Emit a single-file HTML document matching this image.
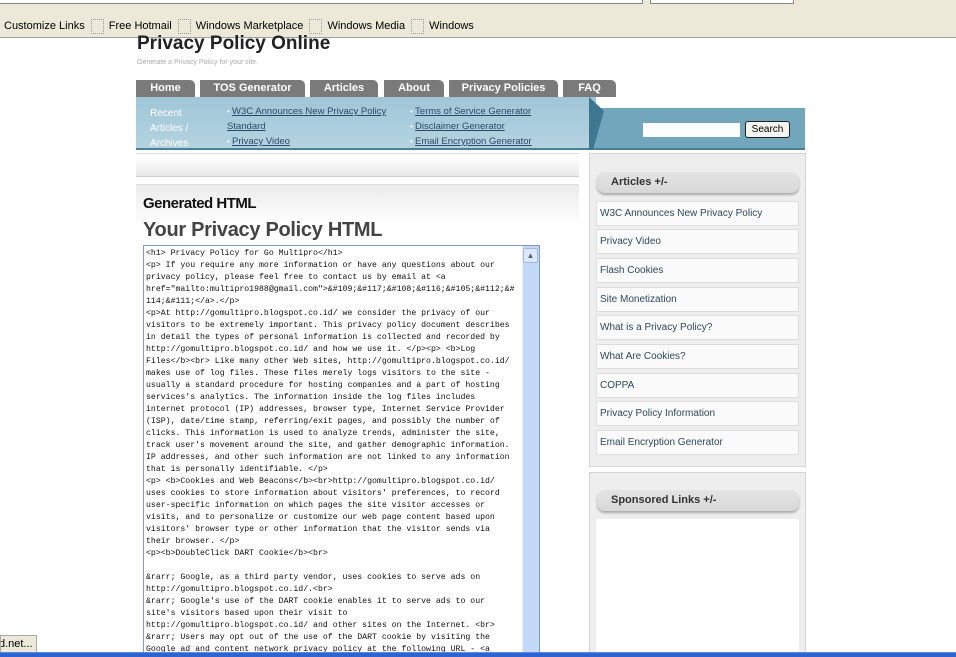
<!DOCTYPE html>
<html><head><meta charset="utf-8"><style>
*{margin:0;padding:0;box-sizing:border-box}
html,body{width:956px;height:657px;overflow:hidden}
body{background:#fff;font-family:"Liberation Sans",sans-serif;position:relative}
.a{position:absolute}
.tab{position:absolute;top:80px;height:17px;background:#7a7a7a;color:#fff;font-weight:bold;font-size:11px;text-align:center;line-height:17px;border-radius:0 5px 0 0}
.blink{color:#2a4a6a;text-decoration:underline;font-size:9.5px}
.bul{color:#fff;font-size:8px}
.item{position:absolute;left:596px;width:203px;height:25px;background:#fafafa;border:1px solid #ddd;font-size:10px;color:#2d4a5a;padding-left:3px;line-height:24px}
pre{font-family:"Liberation Mono",monospace;font-size:8.2px;line-height:12px;color:#111}
.pill{position:absolute;left:597px;width:202px;height:21px;background:linear-gradient(#e4e4e4,#d8d8d8);border-radius:8px;box-shadow:0 2px 2px #aaa;font-weight:bold;font-size:11px;color:#333;padding-left:14px;line-height:21px}
.dot{display:inline-block;width:13px;height:15px;border:1px dotted #999;vertical-align:middle;margin:0 5px 0 3px}
</style></head><body>
<div class="a" style="left:0;top:0;width:956px;height:13px;background:#ece9d8"></div>
<div class="a" style="left:0;top:0;width:643px;height:4px;background:#fff;border-bottom:1px solid #888;border-right:1px solid #888"></div>
<div class="a" style="left:650px;top:0;width:144px;height:4px;background:#fff;border:1px solid #888;border-top:0"></div>
<div class="a" style="left:0;top:13px;width:956px;height:25px;background:#ece9d8;border-bottom:1px solid #a0a0a0;font-size:11px;color:#000;line-height:26px;padding-left:4px;white-space:nowrap">Customize Links <span class="dot"></span>Free Hotmail <span class="dot"></span>Windows Marketplace <span class="dot"></span>Windows Media <span class="dot"></span>Windows</div>

<div class="a" style="left:137px;top:33px;font-size:19px;font-weight:bold;color:#222">Privacy Policy Online</div>
<div class="a" style="left:137px;top:59px;font-size:7px;color:#aaa">Generate a Privacy Policy for your site.</div>

<div class="tab" style="left:136px;width:59px">Home</div>
<div class="tab" style="left:200px;width:105px">TOS Generator</div>
<div class="tab" style="left:310px;width:68px">Articles</div>
<div class="tab" style="left:384px;width:60px">About</div>
<div class="tab" style="left:449px;width:109px">Privacy Policies</div>
<div class="tab" style="left:563px;width:53px">FAQ</div>

<div class="a" style="left:136px;top:97px;width:460px;height:53px;background:linear-gradient(#9fc6d7,#b4d3e0);border-bottom:2px solid #4d7f98"></div>
<div class="a" style="left:589px;top:108px;width:216px;height:42px;background:#72a6bc;border-bottom:2px solid #4d7f98"></div>
<svg class="a" style="left:589px;top:97px" width="16" height="53"><polygon points="0,0 0,53 4,53 15,14" fill="#3f7690"/></svg>
<div class="a" style="left:150px;top:106px;font-size:10px;color:#fff;line-height:15px">Recent<br>Articles /<br>Archives</div>
<div class="a" style="left:227px;top:104px;line-height:15px;font-size:10px;width:170px"><span class="bul">• </span><span class="blink">W3C Announces New Privacy Policy Standard</span><br><span class="bul">• </span><span class="blink">Privacy Video</span></div>
<div class="a" style="left:410px;top:104px;line-height:15px;font-size:10px"><span class="bul">• </span><span class="blink">Terms of Service Generator</span><br><span class="bul">• </span><span class="blink">Disclaimer Generator</span><br><span class="bul">• </span><span class="blink">Email Encryption Generator</span></div>
<div class="a" style="left:643px;top:123px;width:97px;height:14px;background:#fff"></div>
<div class="a" style="left:745px;top:121px;width:45px;height:17px;background:#f4f4f0;border:1px solid #222;border-radius:3px;font-size:10px;text-align:center;line-height:15px">Search</div>

<div class="a" style="left:136px;top:153px;width:443px;height:24px;background:linear-gradient(#fff,#eaeaea);border-top:1px solid #ddd;border-bottom:1px solid #ccc"></div>
<div class="a" style="left:136px;top:184px;width:443px;height:40px;background:linear-gradient(#ebebeb,#fff);border-top:1px solid #ddd"></div>
<div class="a" style="left:143px;top:195px;font-size:15px;font-weight:bold;color:#111;letter-spacing:-0.5px">Generated HTML</div>
<div class="a" style="left:143px;top:219px;font-size:20px;font-weight:bold;color:#444;letter-spacing:-0.3px">Your Privacy Policy HTML</div>

<div class="a" style="left:143px;top:245px;width:397px;height:412px;border:1px solid #7f9db9;border-bottom:0;background:#fff;overflow:hidden">
<pre style="padding:2px 0 0 2px">&lt;h1&gt; Privacy Policy for Go Multipro&lt;/h1&gt;
&lt;p&gt; If you require any more information or have any questions about our
privacy policy, please feel free to contact us by email at &lt;a
href="mailto:multipro1988@gmail.com"&gt;&amp;#109;&amp;#117;&amp;#108;&amp;#116;&amp;#105;&amp;#112;&amp;#
114;&amp;#111;&lt;/a&gt;.&lt;/p&gt;
&lt;p&gt;At http://gomultipro.blogspot.co.id/ we consider the privacy of our
visitors to be extremely important. This privacy policy document describes
in detail the types of personal information is collected and recorded by
http://gomultipro.blogspot.co.id/ and how we use it. &lt;/p&gt;&lt;p&gt; &lt;b&gt;Log
Files&lt;/b&gt;&lt;br&gt; Like many other Web sites, http://gomultipro.blogspot.co.id/
makes use of log files. These files merely logs visitors to the site -
usually a standard procedure for hosting companies and a part of hosting
services's analytics. The information inside the log files includes
internet protocol (IP) addresses, browser type, Internet Service Provider
(ISP), date/time stamp, referring/exit pages, and possibly the number of
clicks. This information is used to analyze trends, administer the site,
track user's movement around the site, and gather demographic information.
IP addresses, and other such information are not linked to any information
that is personally identifiable. &lt;/p&gt;
&lt;p&gt; &lt;b&gt;Cookies and Web Beacons&lt;/b&gt;&lt;br&gt;http://gomultipro.blogspot.co.id/
uses cookies to store information about visitors' preferences, to record
user-specific information on which pages the site visitor accesses or
visits, and to personalize or customize our web page content based upon
visitors' browser type or other information that the visitor sends via
their browser. &lt;/p&gt;
&lt;p&gt;&lt;b&gt;DoubleClick DART Cookie&lt;/b&gt;&lt;br&gt;

&amp;rarr; Google, as a third party vendor, uses cookies to serve ads on
http://gomultipro.blogspot.co.id/.&lt;br&gt;
&amp;rarr; Google's use of the DART cookie enables it to serve ads to our
site's visitors based upon their visit to
http://gomultipro.blogspot.co.id/ and other sites on the Internet. &lt;br&gt;
&amp;rarr; Users may opt out of the use of the DART cookie by visiting the
Google ad and content network privacy policy at the following URL - &lt;a</pre>
<div class="a" style="left:378px;top:0;width:17px;height:420px;background:#c4d8f8;border-left:1px solid #e6eefc"></div>
<div class="a" style="left:379px;top:2px;width:15px;height:15px;background:#dde8fc;border:1px solid #9fb8e8;border-radius:2px;font-size:8px;text-align:center;line-height:13px;color:#4d6185">▲</div>
</div>

<div class="a" style="left:589px;top:153px;width:217px;height:314px;background:#eee;border:1px solid #d4d4d4"></div>
<div class="pill" style="top:172px">Articles +/-</div>
<div class="item" style="top:201px">W3C Announces New Privacy Policy Standard</div>
<div class="item" style="top:229px">Privacy Video</div>
<div class="item" style="top:258px">Flash Cookies</div>
<div class="item" style="top:287px">Site Monetization</div>
<div class="item" style="top:315px">What is a Privacy Policy?</div>
<div class="item" style="top:344px">What Are Cookies?</div>
<div class="item" style="top:373px">COPPA</div>
<div class="item" style="top:401px">Privacy Policy Information</div>
<div class="item" style="top:430px">Email Encryption Generator</div>

<div class="a" style="left:589px;top:472px;width:217px;height:185px;background:#eee;border:1px solid #d4d4d4;border-bottom:0"></div>
<div class="pill" style="top:490px">Sponsored Links +/-</div>
<div class="a" style="left:596px;top:519px;width:203px;height:138px;background:#fff"></div>

<div class="a" style="left:0;top:635px;width:37px;height:18px;background:#ece9d8;border:1px solid #aaa;font-size:11px;line-height:16px;text-indent:-2px;overflow:hidden">d.net...</div>
<div class="a" style="left:0;top:652px;width:956px;height:5px;background:#2e64d0;border-top:1px solid #5a8ae8"></div>
</body></html>
